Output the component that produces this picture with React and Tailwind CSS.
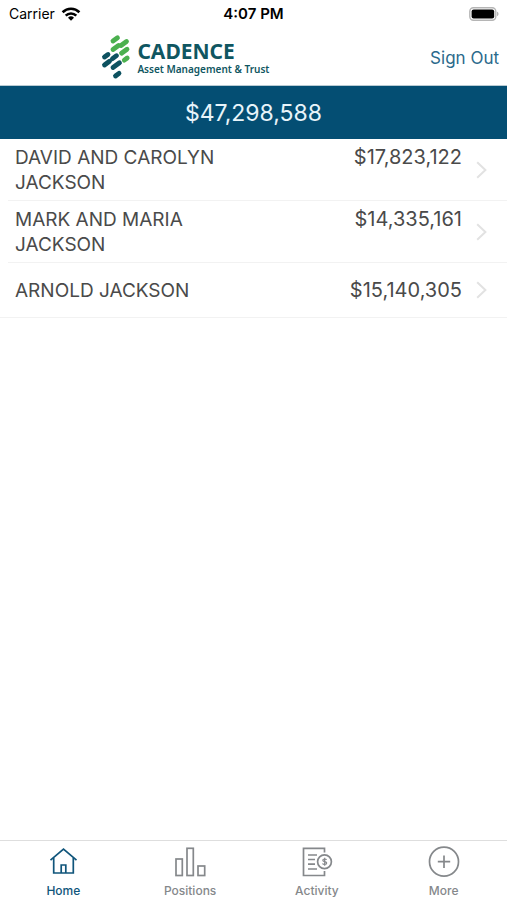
import React from 'react';

const accounts = [
  { name: 'DAVID AND CAROLYN JACKSON', value: '$17,823,122' },
  { name: 'MARK AND MARIA JACKSON', value: '$14,335,161' },
  { name: 'ARNOLD JACKSON', value: '$15,140,305' },
];

const StatusBar = () => (
  <div className="grid h-7 grid-cols-3 items-center px-2 text-black">
    <div className="flex items-center gap-1.5">
      <span className="pl-px text-sm">Carrier</span>
      <svg width="20" height="14" viewBox="0 0 20 14" fill="none" stroke="currentColor" strokeWidth="2.6">
        <path d="M1.6 5.2a12 12 0 0 1 16.8 0" />
        <path d="M4.7 8.6a7.6 7.6 0 0 1 10.6 0" />
        <path d="M10 13.8 7 10.8a4.3 4.3 0 0 1 6 0z" fill="currentColor" stroke="none" />
      </svg>
    </div>
    <span className="text-center text-[15px] leading-5 font-semibold">4:07 PM</span>
    <svg className="justify-self-end" width="30" height="14" viewBox="0 0 30 14">
      <rect x="0.8" y="0.8" width="26" height="12.4" rx="3.6" fill="#fff" stroke="#b5b5b5" strokeWidth="1.4" />
      <rect x="2.6" y="2.4" width="22.6" height="9.2" rx="2" fill="#000" />
      <path d="M28 4.8c2 .6 2 3.8 0 4.4z" fill="#b5b5b5" />
    </svg>
  </div>
);

const Logo = () => (
  <div className="flex items-center gap-1.5">
    <svg width="30" height="46" viewBox="0 0 30 46" fill="none" strokeWidth="4.8" strokeLinecap="round">
      <g stroke="#4bb04f">
        <path d="M12 7 16.500 3.800" />
        <path d="M20 11.500 25.500 7.500" />
        <path d="M12 15.500 17.500 11.500" />
        <path d="M20.500 19.200 26 15.200" />
        <path d="M23.300 26.200 26.200 24" />
      </g>
      <g stroke="#0d5260">
        <path d="M3.500 23 7 20.500" />
        <path d="M3.500 31 8.500 27.300" />
        <path d="M11.500 24.700 15.500 21.700" />
        <path d="M12 33.500 18.500 28.800" />
        <path d="M14.500 42 18 39.300" />
      </g>
    </svg>
    <div className="font-['Noto_Sans',sans-serif] text-[#0f5661]">
      <div className="text-[21px] leading-6 font-bold">CADENCE</div>
      <div className="text-[10px] leading-3 font-semibold">Asset Management &amp; Trust</div>
    </div>
  </div>
);

const Header = () => (
  <header className="flex h-[58px] items-center justify-between border-b border-[#b9cbd3] pr-2 pl-[20%]">
    <Logo />
    <button type="button" className="pt-1 text-[17px] text-[#2b6a8c]">
      Sign Out
    </button>
  </header>
);

const AccountRow = ({ name, value }) => (
  <li className="group">
    <button type="button" className="flex min-h-[54px] w-full items-center pr-5 pl-[15px] text-left">
      <span className="flex flex-1 justify-between pt-[6px] pb-[5px] leading-[25px]">
        <span className="w-[210px] text-[19px]">{name}</span>
        <span className="text-[20px]">{value}</span>
      </span>
      <svg className="ml-[14px]" width="11" height="18" viewBox="0 0 11 18" fill="none" stroke="#e2e2e2" strokeWidth="2">
        <path d="M1.2 1.2 9.4 9l-8.2 7.8" />
      </svg>
    </button>
    <div className="ml-2 h-px bg-[#f2f2f2] group-last:ml-0" />
  </li>
);

const HomeIcon = () => (
  <svg width="32" height="32" viewBox="0 0 32 32" fill="none" stroke="currentColor" strokeWidth="1.7">
    <path d="M3.5 14.2 16.5 3.200l13 11" />
    <path d="M6.700 12v15h19.600V12" />
    <path d="M14.200 27v-8h4.600v8" />
  </svg>
);

const PositionsIcon = () => (
  <svg width="32" height="32" viewBox="0 0 32 32" fill="none" stroke="currentColor" strokeWidth="1.7">
    <rect x="2" y="13" width="6.300" height="16.500" />
    <rect x="13" y="2.300" width="6.300" height="27.200" />
    <rect x="24" y="20" width="6.700" height="9.500" />
  </svg>
);

const ActivityIcon = () => (
  <svg width="32" height="32" viewBox="0 0 32 32" fill="none" stroke="currentColor" strokeWidth="1.7">
    <path d="M23.5 6.500V2.300H2.500v27.200h21V25" />
    <path d="M7 9h9M7 13.500h7M7 18.200h7M7 23h9" />
    <circle cx="23.500" cy="15.700" r="6.900" />
    <path d="M25.600 13.800c-.5-1-3.800-1.300-3.800.5s3.900.9 3.900 2.800-3.600 1.700-4.200.3M23.700 11.700v8" strokeWidth="1.200" />
  </svg>
);

const MoreIcon = () => (
  <svg width="32" height="32" viewBox="0 0 32 32" fill="none" stroke="currentColor" strokeWidth="1.7">
    <circle cx="16" cy="15.700" r="14.500" />
    <path d="M16 9.500v12.400M9.800 15.700h12.400" />
  </svg>
);

const tabs = [
  { label: 'Home', Icon: HomeIcon, active: true },
  { label: 'Positions', Icon: PositionsIcon },
  { label: 'Activity', Icon: ActivityIcon },
  { label: 'More', Icon: MoreIcon },
];

const TabBar = () => (
  <nav className="grid grid-cols-4 border-t border-[#dedede] pt-[5px]">
    {tabs.map(({ label, Icon, active }) => (
      <button
        key={label}
        type="button"
        className={`flex flex-col items-center gap-[5px] pb-px ${active ? 'text-[#10557b]' : 'text-[#85888b]'}`}
      >
        <Icon />
        <span className="text-xs leading-4 font-medium">{label}</span>
      </button>
    ))}
  </nav>
);

const App = () => {
  return (
    <div className="flex min-h-screen flex-col bg-white font-['Inter',sans-serif] text-[#4a4a4a]">
      <StatusBar />
      <Header />
      <div className="bg-[#044e73] pt-[13px] pb-[11px] text-center text-[23px] leading-[29px] text-[#e8f4fa]">
        $47,298,588
      </div>
      <main className="flex-1">
        <ul>
          {accounts.map((account) => (
            <AccountRow key={account.name} name={account.name} value={account.value} />
          ))}
        </ul>
      </main>
      <TabBar />
    </div>
  );
};

export default App;
